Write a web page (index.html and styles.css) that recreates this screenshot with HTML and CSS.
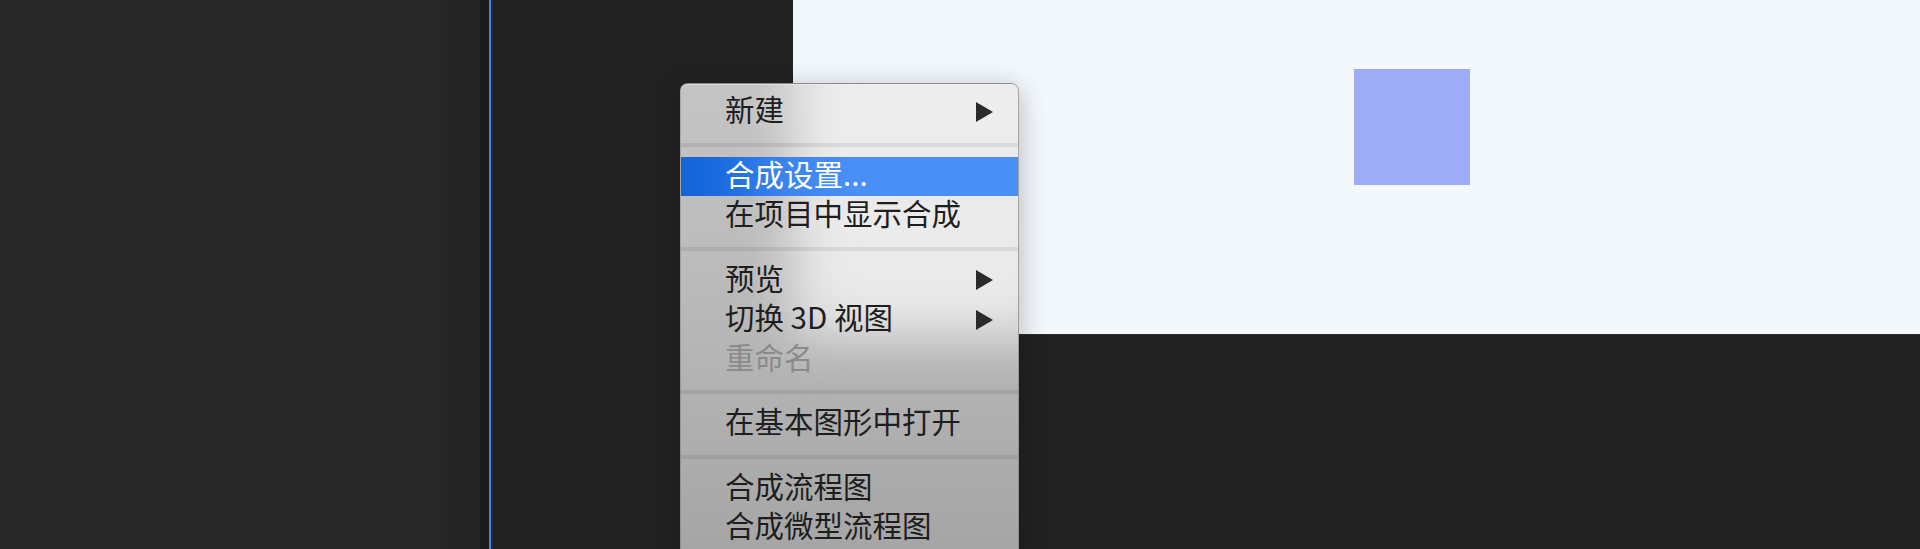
FILE: index.html
```html
<!DOCTYPE html>
<html lang="zh-CN">
<head>
  <meta charset="UTF-8"/>
  <title>合成</title>
  <link rel="stylesheet" href="styles.css">
</head>
<body>

  <!-- WORKSPACE PANELS -->
  <div class="workspace">
    <div class="panel-left"></div>
    <div class="panel-strip"></div>
    <div class="panel-gutter"></div>
    <div class="time-marker"></div>
    <div class="panel-timeline"></div>

    <!-- COMPOSITION VIEWER -->
    <div class="viewer">
      <div class="comp-canvas">
        <div class="shape-layer"></div>
      </div>
      <div class="viewer-floor"></div>
    </div>
  </div>

  <!-- CONTEXT MENU -->
  <div class="context-menu">
    <div class="menu-item">
      <span>新建</span>
      <svg class="submenu-arrow" viewBox="0 0 17 20"><polygon points="0,0 17,10 0,20"/></svg>
    </div>
    <div class="menu-sep"></div>
    <div class="menu-item active"><span>合成设置...</span></div>
    <div class="menu-item"><span>在项目中显示合成</span></div>
    <div class="menu-sep"></div>
    <div class="menu-item">
      <span>预览</span>
      <svg class="submenu-arrow" viewBox="0 0 17 20"><polygon points="0,0 17,10 0,20"/></svg>
    </div>
    <div class="menu-item">
      <span>切换 3D 视图</span>
      <svg class="submenu-arrow" viewBox="0 0 17 20"><polygon points="0,0 17,10 0,20"/></svg>
    </div>
    <div class="menu-item disabled"><span>重命名</span></div>
    <div class="menu-sep"></div>
    <div class="menu-item"><span>在基本图形中打开</span></div>
    <div class="menu-sep"></div>
    <div class="menu-item"><span>合成流程图</span></div>
    <div class="menu-item"><span>合成微型流程图</span></div>
  </div>

</body>
</html>
```

FILE: styles.css
```css
/* GLOBAL */
* {
  margin: 0;
  padding: 0;
  box-sizing: border-box;
}
body {
  width: 1920px;
  height: 549px;
  overflow: hidden;
  background: #222;
  font-family: "Noto Sans CJK SC", "Noto Sans", sans-serif;
}
/* PANELS */
.workspace {
  display: flex;
  height: 549px;
}
.panel-left {
  width: 442px;
  background: #272727;
}
.panel-strip {
  width: 38px;
  background: #252525;
}
.panel-gutter {
  width: 9px;
  background: #1b1b1b;
}
.time-marker {
  width: 2px;
  background: #2f8ae8;
}
.panel-timeline {
  width: 302px;
  background: #222;
}
/* VIEWER */
.viewer {
  flex: 1;
  display: flex;
  flex-direction: column;
}
.comp-canvas {
  position: relative;
  height: 335px;
  background: #f3f8fc;
  border-bottom: 1px solid #2e2f31;
}
.shape-layer {
  position: absolute;
  left: 561px;
  top: 69px;
  width: 116px;
  height: 116px;
  background: #9eabf6;
}
.viewer-floor {
  flex: 1;
  background: #222;
}
/* CONTEXT MENU */
.context-menu {
  position: absolute;
  left: 680px;
  top: 83px;
  width: 339px;
  padding: 8px 0 10px;
  overflow: hidden;
  border-radius: 8px;
  border: 1px solid rgba(0,0,0,0.14);
  background: linear-gradient(180deg, #c4c4c4 0%, #bbbbbb 40%, #a5a5a5 100%);
  box-shadow: 0 6px 28px rgba(0,0,0,0.28), inset 0 1px 0 rgba(255,255,255,0.35);
}
/* light canvas showing through the menu */
.context-menu::before {
  content: "";
  position: absolute;
  left: 112px;
  top: -60px;
  right: -60px;
  height: 312px;
  background: linear-gradient(180deg, #eeeeee 0%, #e9e9e9 100%);
  filter: blur(26px);
}
.menu-item {
  position: relative;
  display: flex;
  align-items: center;
  justify-content: space-between;
  height: 39.5px;
  padding: 0 25px 0 44px;
  font-size: 29.5px;
  line-height: 39.5px;
  color: #1e1e1e;
}
.menu-item span {
  position: relative;
  top: -3px;
}
.menu-item.active {
  color: #fff;
  background: linear-gradient(90deg, #1464d8 0%, #1c6be0 12%, #3a83ef 30%, #4a8ff5 50%, #4a8ff5 100%);
}
.menu-item.disabled {
  color: #8b8b8b;
}
.submenu-arrow {
  width: 17px;
  height: 20px;
  fill: #2a2a2a;
}
.menu-sep {
  position: relative;
  height: 4px;
  margin: 11px 0 10px;
  background: rgba(0,0,0,0.08);
}
```
